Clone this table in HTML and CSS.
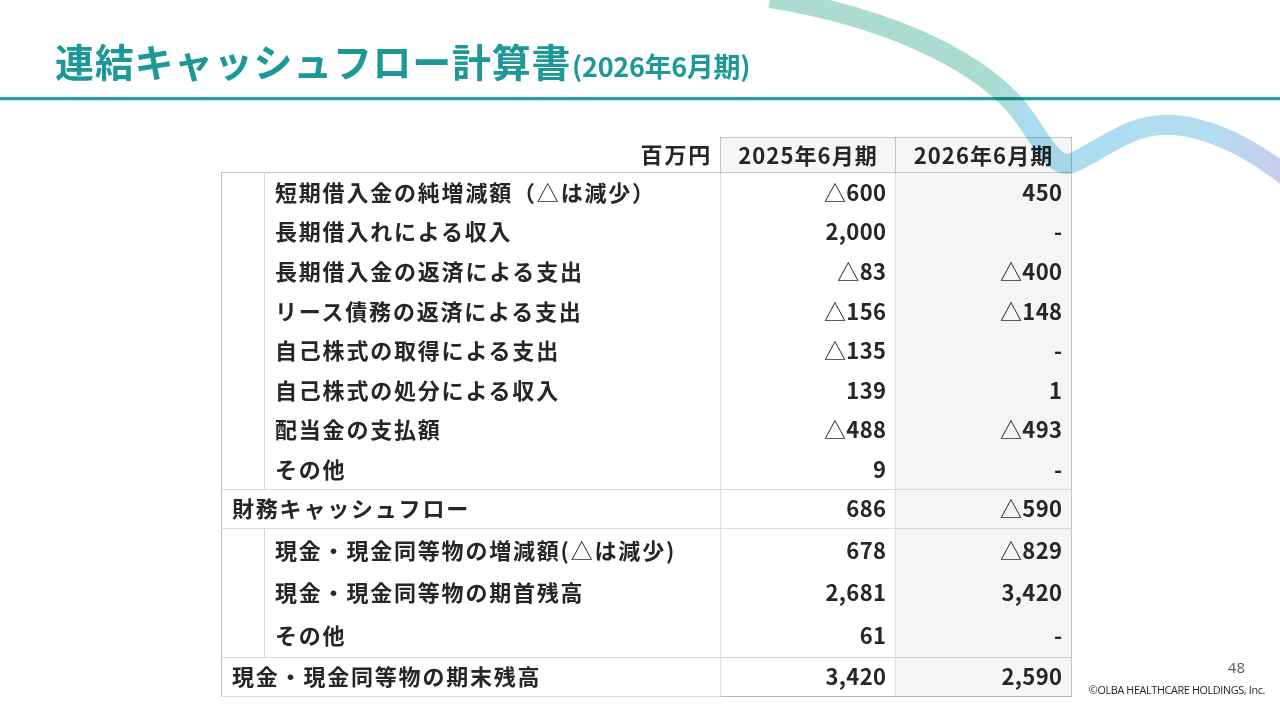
FILE: index.html
```html
<!DOCTYPE html>
<html lang="ja">
<head>
<meta charset="utf-8">
<title>連結キャッシュフロー計算書</title>
<link rel="stylesheet" href="styles.css">
</head>
<body>
<div class="slide">
  <header class="head">
    <h1 class="title">連結キャッシュフロー計算書<span class="sub">(2026年6月期)</span></h1>
  </header>
  <div class="rule"></div>

  <div class="main">
    <table class="cf">
      <colgroup>
        <col class="c-ind"><col class="c-lab"><col class="c-v1"><col class="c-v2">
      </colgroup>
      <thead>
        <tr class="hrow">
          <td class="unit" colspan="2">百万円</td>
          <th class="yh">2025年6月期</th>
          <th class="yh">2026年6月期</th>
        </tr>
      </thead>
      <tbody class="g1">
        <tr><td class="ind" rowspan="8"></td><td class="lab">短期借入金の純増減額（<span class="tri">△</span>は減少）</td><td class="v1"><span class="tri">△</span>600</td><td class="v2">450</td></tr>
        <tr><td class="lab">長期借入れによる収入</td><td class="v1">2,000</td><td class="v2">-</td></tr>
        <tr><td class="lab">長期借入金の返済による支出</td><td class="v1"><span class="tri">△</span>83</td><td class="v2"><span class="tri">△</span>400</td></tr>
        <tr><td class="lab">リース債務の返済による支出</td><td class="v1"><span class="tri">△</span>156</td><td class="v2"><span class="tri">△</span>148</td></tr>
        <tr><td class="lab">自己株式の取得による支出</td><td class="v1"><span class="tri">△</span>135</td><td class="v2">-</td></tr>
        <tr><td class="lab">自己株式の処分による収入</td><td class="v1">139</td><td class="v2">1</td></tr>
        <tr><td class="lab">配当金の支払額</td><td class="v1"><span class="tri">△</span>488</td><td class="v2"><span class="tri">△</span>493</td></tr>
        <tr class="last"><td class="lab">その他</td><td class="v1">9</td><td class="v2">-</td></tr>
      </tbody>
      <tbody class="tot">
        <tr><td class="lab top" colspan="2">財務キャッシュフロー</td><td class="v1">686</td><td class="v2"><span class="tri">△</span>590</td></tr>
      </tbody>
      <tbody class="g2">
        <tr><td class="ind" rowspan="3"></td><td class="lab">現金・現金同等物の増減額(<span class="tri">△</span>は減少)</td><td class="v1">678</td><td class="v2"><span class="tri">△</span>829</td></tr>
        <tr><td class="lab">現金・現金同等物の期首残高</td><td class="v1">2,681</td><td class="v2">3,420</td></tr>
        <tr><td class="lab">その他</td><td class="v1">61</td><td class="v2">-</td></tr>
      </tbody>
      <tbody class="tot end">
        <tr><td class="lab top" colspan="2">現金・現金同等物の期末残高</td><td class="v1">3,420</td><td class="v2">2,590</td></tr>
      </tbody>
    </table>

    <footer class="foot">
      <span class="page">48</span>
      <span class="copy">©OLBA HEALTHCARE HOLDINGS, Inc.</span>
    </footer>
  </div>

  <svg class="swoosh" viewBox="0 0 1280 720" width="1280" height="720" aria-hidden="true">
    <defs>
      <linearGradient id="sw" gradientUnits="userSpaceOnUse" x1="995" y1="85" x2="1290" y2="185">
        <stop offset="0" stop-color="#abdccf"/>
        <stop offset="0.13" stop-color="#a9dcf0"/>
        <stop offset="0.7" stop-color="#b2ddf2"/>
        <stop offset="1" stop-color="#cbc9ea"/>
      </linearGradient>
    </defs>
    <path d="M 770 -2 C 880 16, 970 55, 1015 105 C 1040 135, 1052 170, 1072 163 C 1100 152, 1130 121, 1175 125 C 1215 129, 1255 150, 1295 183" fill="none" stroke="url(#sw)" stroke-width="20" stroke-linecap="butt"/>
  </svg>
</div>
</body>
</html>
```

FILE: styles.css
```css
* { box-sizing: border-box; }

html, body {
  margin: 0;
  padding: 0;
  background: #ffffff;
}

body {
  font-family: "Noto Sans CJK JP", "Noto Sans", sans-serif;
  color: #262626;
}

.slide {
  position: relative;
  width: 1280px;
  height: 720px;
  overflow: hidden;
  background: #ffffff;
}

.head {
  height: 97px;
  padding: 36px 0 0 55px;
}

.title {
  margin: 0;
  font-size: 39px;
  line-height: 48px;
  font-weight: 700;
  color: #1d9898;
  letter-spacing: 0.7px;
  display: flex;
  align-items: baseline;
}

.sub {
  font-size: 27px;
  letter-spacing: -0.3px;
  margin-left: 1px;
}

.rule {
  height: 4px;
  background: #24a09d;
  border-bottom: 1px solid #bfe6e4;
}

.main {
  display: flex;
  padding: 36px 0 0 221px;
}

.cf {
  width: 850px;
  table-layout: fixed;
  border-collapse: collapse;
  font-size: 22px;
  font-weight: 700;
  letter-spacing: 1.8px;
  color: #262626;
}

.c-ind { width: 43px; }
.c-lab { width: 456px; }
.c-v1 { width: 175px; }
.c-v2 { width: 176px; }

.cf td, .cf th {
  padding: 0 0 3px 0;
  white-space: nowrap;
  line-height: 1;
}

.hrow { height: 35px; }

.unit {
  text-align: right;
  padding-right: 8px !important;
  border: none;
}

.yh {
  font-weight: 700;
  text-align: center;
  letter-spacing: 1.1px;
  background: #f6f6f6;
  border: 1px solid #c6c6c6;
}

.g1 tr { height: 39.6px; }
.g2 tr { height: 43px; }
.tot tr { height: 39px; }

.ind {
  border-left: 1px solid #bdbdbd;
  border-right: 1px solid #d6d6d6;
}

.lab {
  padding-left: 10px !important;
}

.lab.top {
  border-left: 1px solid #bdbdbd;
  border-top: 1px solid #dadada;
  border-bottom: 1px solid #dadada;
}

.v1, .v2 {
  text-align: right;
  letter-spacing: 0.4px;
  padding-right: 8.5px !important;
  border-left: 1px solid #e0e0e0;
}

.v2 {
  background: #f5f5f5;
  border-right: 1px solid #c6c6c6;
}

.g1 tr:first-child td { border-top: 1px solid #c6c6c6; }

.tot td { border-top: 1px solid #dadada; border-bottom: 1px solid #dadada; }

.end td { border-top: 1px solid #cfcfcf; border-bottom: 1px solid #b8b8b8; }

.tri {
  font-weight: 400;
}

.foot {
  flex: 1;
  display: flex;
  flex-direction: column;
  align-items: flex-end;
  justify-content: flex-end;
  padding: 0 15px 0 0;
}

.page {
  font-family: "Open Sans", "Noto Sans", sans-serif;
  font-size: 15px;
  color: #595959;
  margin-right: 20px;
  margin-bottom: 10px;
  line-height: 1;
}

.copy {
  font-family: "Open Sans", "Noto Sans", sans-serif;
  font-size: 10.8px;
  letter-spacing: -0.35px;
  color: #262626;
  line-height: 1;
  margin-bottom: 1px;
}

.swoosh {
  position: absolute;
  left: 0;
  top: 0;
  pointer-events: none;
  mix-blend-mode: multiply;
}
```
